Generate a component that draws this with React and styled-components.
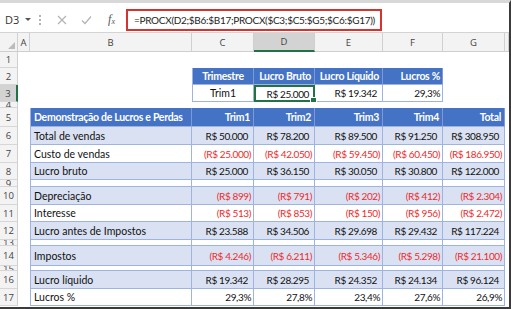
import React from 'react';
import styled, { createGlobalStyle } from 'styled-components';

const GlobalStyle = createGlobalStyle`
  html, body { margin: 0; padding: 0; background: #ffffff; }
  body { font-family: Lato, "Open Sans", sans-serif; }
`;

const COLS = '18px 12px 162px 62px 61px 68px 60px 62px 1fr';

const BLUE = '#4472c4';
const BAND = '#d9e1f2';
const LINE = '#9db4e0';
const RED = '#ee2b2b';
const GREEN = '#217346';

const Frame = styled.div`
  box-sizing: border-box;
  width: 511px;
  height: 309px;
  border-top: 3px solid #d8d8d8;
  border-right: 2px solid #3b3b3b;
  border-bottom: 2px solid #3b3b3b;
  overflow: hidden;
  background: #fff;
`;

const FormulaBar = styled.div`
  box-sizing: border-box;
  height: 30px;
  display: flex;
  align-items: flex-start;
  padding-top: 6px;
  border-bottom: 1px solid #d4d4d4;
  font-family: "Open Sans", sans-serif;
`;

const NameBox = styled.div`
  width: 36px;
  height: 21px;
  display: flex;
  align-items: center;
  padding-left: 5px;
  box-sizing: border-box;
  font-size: 11px;
  color: #333;
  gap: 6px;
`;

const Caret = styled.span`
  width: 0;
  height: 0;
  border-left: 3px solid transparent;
  border-right: 3px solid transparent;
  border-top: 3px solid #555;
`;

const Grip = styled.div`
  width: 2px;
  height: 21px;
  margin-left: 3px;
  display: flex;
  flex-direction: column;
  justify-content: center;
  gap: 2px;
  & > i {
    width: 2px;
    height: 2px;
    background: #b4b4b4;
  }
`;

const Tools = styled.div`
  width: 84px;
  height: 21px;
  display: flex;
  align-items: center;
  padding-left: 8px;
  box-sizing: border-box;
`;

const ToolIcon = styled.span`
  width: 25px;
  display: flex;
  justify-content: center;
  align-items: center;
`;

const Fx = styled.span`
  font-family: "Liberation Serif", serif;
  font-style: italic;
  font-size: 12px;
  color: #555;
  & > sub {
    font-size: 8px;
    vertical-align: -1px;
  }
`;

const FormulaInput = styled.div`
  box-sizing: border-box;
  width: 256px;
  height: 22px;
  margin-left: 1px;
  border: 2px solid #d6332f;
  display: flex;
  align-items: center;
  padding-left: 6px;
  font-family: Lato, sans-serif;
  font-size: 10px;
  letter-spacing: -0.3px;
  color: #222;
  white-space: nowrap;
  overflow: hidden;
`;

const SheetRow = styled.div`
  display: grid;
  grid-template-columns: ${COLS};
  height: ${p => p.$h}px;
  overflow: hidden;
`;

const ColHead = styled.div`
  box-sizing: border-box;
  display: flex;
  align-items: center;
  justify-content: center;
  font-family: "Open Sans", sans-serif;
  font-size: 9.5px;
  color: #444;
  background: ${p => (p.$active ? '#d3d3d3' : '#f3f3f3')};
  border-right: 1px solid #d0d0d0;
  border-bottom: ${p => (p.$active ? `2px solid ${GREEN}` : '1px solid #cfcfcf')};
  position: relative;
`;

const Corner = styled.span`
  position: absolute;
  right: 2px;
  bottom: 2px;
  width: 0;
  height: 0;
  border-left: 7px solid transparent;
  border-bottom: 7px solid #bcbcbc;
`;

const RowHead = styled.div`
  box-sizing: border-box;
  display: flex;
  align-items: center;
  justify-content: center;
  font-family: "Open Sans", sans-serif;
  font-size: 9.5px;
  color: #444;
  background: ${p => (p.$active ? '#d3d3d3' : '#f3f3f3')};
  border-right: ${p => (p.$active ? `2px solid ${GREEN}` : '1px solid #d0d0d0')};
  border-bottom: 1px solid #d6d6d6;
  overflow: hidden;
`;

const Blank = styled.div``;

const Cell = styled.div`
  box-sizing: border-box;
  display: flex;
  align-items: center;
  justify-content: ${p =>
    p.$align === 'right' ? 'flex-end' : p.$align === 'center' ? 'center' : 'flex-start'};
  padding: 0 ${p => p.$pr}px 0 3px;
  font-size: ${p => (p.$num ? 10 : 10.5)}px;
  letter-spacing: ${p => (p.$num ? -0.4 : p.$head ? -0.3 : 0)}px;
  white-space: nowrap;
  overflow: hidden;
  color: ${p => (p.$head ? '#fff' : p.$neg ? RED : '#111')};
  font-weight: ${p => (p.$head ? 700 : 400)};
  background: ${p => (p.$head ? BLUE : p.$band ? BAND : '#fff')};
  border-right: 1px solid ${p => (p.$head ? '#7c9bd6' : LINE)};
  border-bottom: 1px solid ${LINE};
  border-left: ${p => (p.$first ? `1px solid ${LINE}` : 'none')};
`;

const Selected = styled(Cell)`
  position: relative;
  border: 2px solid ${GREEN};
  padding-right: 4px;
  overflow: visible;
`;

const Handle = styled.span`
  position: absolute;
  right: -4px;
  bottom: -4px;
  width: 5px;
  height: 5px;
  background: ${GREEN};
  border: 1px solid #fff;
`;

const letters = ['A', 'B', 'C', 'D', 'E', 'F', 'G'];

const heights = [16, 17, 17, 6, 19, 18, 18, 17, 7, 18, 17, 18, 6, 20, 5, 18, 17];

const statement = {
  5: { head: true, cells: ['Demonstração de Lucros e Perdas', 'Trim1', 'Trim2', 'Trim3', 'Trim4', 'Total'] },
  6: { band: true, cells: ['Total de vendas', 'R$ 50.000', 'R$ 78.200', 'R$ 89.500', 'R$ 91.250', 'R$ 308.950'] },
  7: { neg: true, cells: ['Custo de vendas', '(R$ 25.000)', '(R$ 42.050)', '(R$ 59.450)', '(R$ 60.450)', '(R$ 186.950)'] },
  8: { band: true, cells: ['Lucro bruto', 'R$ 25.000', 'R$ 36.150', 'R$ 30.050', 'R$ 30.800', 'R$ 122.000'] },
  9: { cells: ['', '', '', '', '', ''] },
  10: { band: true, neg: true, cells: ['Depreciação', '(R$ 899)', '(R$ 791)', '(R$ 202)', '(R$ 412)', '(R$ 2.304)'] },
  11: { neg: true, cells: ['Interesse', '(R$ 513)', '(R$ 853)', '(R$ 150)', '(R$ 956)', '(R$ 2.472)'] },
  12: { band: true, cells: ['Lucro antes de Impostos', 'R$ 23.588', 'R$ 34.506', 'R$ 29.698', 'R$ 29.432', 'R$ 117.224'] },
  13: { cells: ['', '', '', '', '', ''] },
  14: { band: true, neg: true, cells: ['Impostos', '(R$ 4.246)', '(R$ 6.211)', '(R$ 5.346)', '(R$ 5.298)', '(R$ 21.100)'] },
  15: { cells: ['', '', '', '', '', ''] },
  16: { band: true, cells: ['Lucro líquido', 'R$ 19.342', 'R$ 28.295', 'R$ 24.352', 'R$ 24.134', 'R$ 96.124'] },
  17: { pct: true, cells: ['Lucros %', '29,3%', '27,8%', '23,4%', '27,6%', '26,9%'] },
};

function CrossIcon() {
  return (
    <svg width="10" height="10" viewBox="0 0 10 10">
      <path d="M1 1 L9 9 M9 1 L1 9" stroke="#b3b3b3" strokeWidth="1.2" />
    </svg>
  );
}

function CheckIcon() {
  return (
    <svg width="11" height="10" viewBox="0 0 11 10">
      <path d="M1 5.5 L4 8.5 L10 1.5" stroke="#b3b3b3" strokeWidth="1.2" fill="none" />
    </svg>
  );
}

function StatementRow({ row }) {
  return row.cells.map((text, i) => {
    const isLabel = i === 0;
    const neg = row.neg && !isLabel;
    let pr = 3;
    if (!row.head && !isLabel) pr = neg || row.pct ? 2 : 5;
    return (
      <Cell
        key={i}
        $head={row.head}
        $band={row.band}
        $neg={neg}
        $num={!row.head && !isLabel}
        $first={i === 0}
        $align={isLabel ? 'left' : 'right'}
        $pr={pr}
      >
        {text}
      </Cell>
    );
  });
}

export default function App() {
  return (
    <Frame>
      <GlobalStyle />
      <FormulaBar>
        <NameBox>
          D3 <Caret />
        </NameBox>
        <Grip>
          <i />
          <i />
          <i />
        </Grip>
        <Tools>
          <ToolIcon><CrossIcon /></ToolIcon>
          <ToolIcon><CheckIcon /></ToolIcon>
          <ToolIcon><Fx>f<sub>x</sub></Fx></ToolIcon>
        </Tools>
        <FormulaInput>=PROCX(D2;$B6:$B17;PROCX($C3;$C5:$G5;$C6:$G17))</FormulaInput>
      </FormulaBar>

      <SheetRow $h={19}>
        <ColHead><Corner /></ColHead>
        {letters.map(l => (
          <ColHead key={l} $active={l === 'D'}>{l}</ColHead>
        ))}
        <ColHead />
      </SheetRow>

      {heights.map((h, idx) => {
        const n = idx + 1;
        const row = statement[n];
        return (
          <SheetRow key={n} $h={h}>
            <RowHead $active={n === 3}>{n}</RowHead>
            <Blank />
            {n === 2 && (
              <>
                <Blank />
                <Cell $head $first $align="center" $pr={3}>Trimestre</Cell>
                <Cell $head $align="right" $pr={3}>Lucro Bruto</Cell>
                <Cell $head $align="right" $pr={3}>Lucro Líquido</Cell>
                <Cell $head $align="right" $pr={2}>Lucros %</Cell>
                <Blank />
              </>
            )}
            {n === 3 && (
              <>
                <Blank />
                <Cell $first $align="center" $pr={3}>Trim1</Cell>
                <Selected $num $align="right">
                  R$ 25.000
                  <Handle />
                </Selected>
                <Cell $num $align="right" $pr={5}>R$ 19.342</Cell>
                <Cell $num $align="right" $pr={2}>29,3%</Cell>
                <Blank />
              </>
            )}
            {row && <StatementRow row={row} />}
            <Blank />
          </SheetRow>
        );
      })}
    </Frame>
  );
}
